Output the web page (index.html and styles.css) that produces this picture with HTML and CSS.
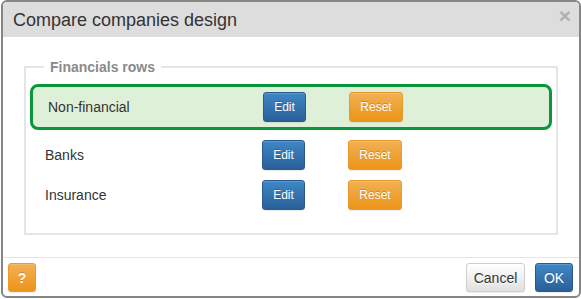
FILE: index.html
```html
<!DOCTYPE html>
<html lang="en">
<head>
    <meta charset="UTF-8">
    <meta name="viewport" content="width=device-width, initial-scale=1.0">
    <title>Compare companies design</title>
    <link rel="stylesheet" href="styles.css">
</head>
<body>
    <div class="modal">
        <div class="modal_header">
            <span class="modal_title">Compare companies design</span>
            <span class="close">&times;</span>
        </div>

        <div class="modal_body">
            <fieldset class="group">
                <legend>Financials rows</legend>

                <div class="row active">
                    <span class="label">Non-financial</span>
                    <button class="btn btn_sm btn_primary">Edit</button>
                    <button class="btn btn_sm btn_warning">Reset</button>
                </div>
                <div class="row">
                    <span class="label">Banks</span>
                    <button class="btn btn_sm btn_primary">Edit</button>
                    <button class="btn btn_sm btn_warning">Reset</button>
                </div>
                <div class="row">
                    <span class="label">Insurance</span>
                    <button class="btn btn_sm btn_primary">Edit</button>
                    <button class="btn btn_sm btn_warning">Reset</button>
                </div>
            </fieldset>
        </div>

        <div class="modal_footer">
            <button class="btn btn_warning btn_help">?</button>
            <div class="footer_right">
                <button class="btn btn_default">Cancel</button>
                <button class="btn btn_primary">OK</button>
            </div>
        </div>
    </div>
</body>
</html>
```

FILE: styles.css
```css
*{
    margin: 0;
    padding: 0;
    box-sizing: border-box;
}

html,body{
    height: 100%;
}

body{
    background-color: #fff;
    font-family: "Liberation Sans", Arial, sans-serif;
    color: #333;
    padding: 0 0 1px 1px;
}

.modal{
    height: 298px;
    border: 2px solid #858585;
    border-radius: 6px;
    background-color: #fff;
    display: flex;
    flex-direction: column;
    overflow: hidden;
}

.modal_header{
    height: 35px;
    background-color: #dddddd;
    display: flex;
    justify-content: space-between;
    align-items: center;
    padding: 0 8px 0 10px;
}

.modal_title{
    font-size: 18px;
    color: #333;
    padding-top: 1px;
}

.close{
    font-size: 21px;
    font-weight: bold;
    color: #b0b0b0;
    line-height: 1;
    align-self: flex-start;
    margin-top: 3px;
}

.modal_body{
    flex: 1;
    padding: 22px 21px 0 21px;
}

.group{
    border: 2px solid #e5e5e5;
    padding: 9px 4px 23px 4px;
}

.group legend{
    font-size: 14px;
    font-weight: bold;
    color: #8a8a8a;
    margin-left: 14px;
    padding: 0 6px;
    line-height: 16px;
}

.row{
    display: flex;
    align-items: center;
    height: 30px;
    margin-top: 10px;
    padding-left: 15px;
    font-size: 14px;
}

.row .label{
    width: 217px;
}

.row.active{
    margin-top: 0;
    height: 46px;
    border: 3px solid #0a963a;
    border-radius: 8px;
    background-color: #dff0d8;
}

.row.active .label{
    width: 215px;
}

.btn{
    font-family: "Liberation Sans", Arial, sans-serif;
    font-size: 14px;
    color: #fff;
    height: 30px;
    padding: 0 12px;
    border: 1px solid transparent;
    border-radius: 3px;
    text-shadow: 0 -1px 0 rgba(0, 0, 0, 0.2);
    box-shadow: inset 0 1px 0 rgba(255, 255, 255, 0.15), 0 1px 1px rgba(0, 0, 0, 0.075);
    cursor: pointer;
}

.btn_sm{
    font-size: 12px;
    padding: 0 10px;
}

.btn_sm.btn_primary{
    width: 43px;
}

.btn_sm.btn_warning{
    width: 54px;
    margin-left: 43px;
}

.btn_primary{
    background-image: linear-gradient(to bottom, #3f87c7 0%, #2a6098 100%);
    border-color: #285b8c;
}

.btn_warning{
    background-image: linear-gradient(to bottom, #f2b054 0%, #ec9418 100%);
    border-color: #e89a2c;
}

.btn_default{
    color: #333;
    text-shadow: 0 1px 0 #fff;
    background-image: linear-gradient(to bottom, #ffffff 0%, #e0e0e0 100%);
    border-color: #cfcfcf;
}

.modal_footer{
    height: 39px;
    border-top: 1px solid #e5e5e5;
    display: flex;
    justify-content: space-between;
    align-items: flex-start;
    padding: 5px 6px 0 5px;
}

.btn_help{
    width: 28px;
    height: 29px;
    padding: 0;
    font-weight: bold;
}

.footer_right{
    display: flex;
    gap: 10px;
}

.footer_right .btn{
    height: 29px;
}

.btn_default{
    width: 59px;
    padding: 0;
}

.footer_right .btn_primary{
    width: 38px;
    padding: 0;
}
```
